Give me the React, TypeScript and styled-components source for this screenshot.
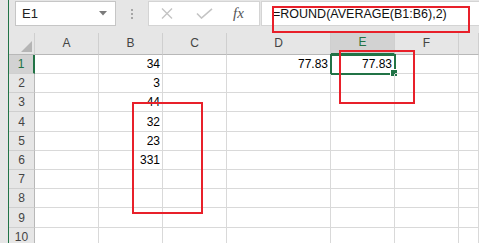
import styled, { createGlobalStyle, css } from "styled-components";

const GlobalStyle = createGlobalStyle`
  html, body {
    margin: 0;
    padding: 0;
    background: #e6e6e6;
  }
  * { box-sizing: border-box; }
`;

const GREEN = "#217346";
const RED = "#e8202a";
const GRID = "#d9d9d9";

const Window = styled.div`
  position: relative;
  width: 479px;
  height: 243px;
  overflow: hidden;
  display: flex;
  background: #e6e6e6;
  font-family: "Liberation Sans", Arial, sans-serif;
`;

const Gutter = styled.div`
  width: 9px;
  flex: none;
  background: #e6e6e6;
  border-right: 1px solid ${GREEN};
`;

const Main = styled.div`
  flex: 1;
  min-width: 0;
  display: flex;
  flex-direction: column;
`;

const FormulaBar = styled.div`
  height: 33px;
  flex: none;
  display: flex;
  align-items: flex-start;
  padding: 1px 0 0 6px;
`;

const NameBox = styled.div`
  width: 101px;
  height: 25px;
  background: #fff;
  border: 1px solid #c6c6c6;
  display: flex;
  align-items: center;
  justify-content: space-between;
  padding: 0 8px 0 6px;
  font-size: 13px;
  color: #222;
`;

const Dots = styled.div`
  width: 32px;
  height: 25px;
  display: flex;
  flex-direction: column;
  align-items: center;
  justify-content: center;
  gap: 2px;
  span {
    width: 2px;
    height: 2px;
    background: #a6a6a6;
  }
`;

const IconBox = styled.div`
  width: 112px;
  height: 25px;
  background: #fff;
  border: 1px solid #d4d4d4;
  display: flex;
  align-items: center;
  padding-left: 12px;
`;

const Fx = styled.span`
  font-family: "Liberation Serif", "Times New Roman", serif;
  font-style: italic;
  font-size: 15px;
  color: #555;
  margin-left: 20px;
`;

const FormulaInput = styled.div`
  flex: 1;
  height: 25px;
  margin-left: 1px;
  background: #fff;
  border: 1px solid #d4d4d4;
  border-right: none;
  display: flex;
  align-items: center;
  padding-left: 11px;
  font-size: 12.5px;
  color: #111;
  white-space: nowrap;
`;

const Sheet = styled.div`
  display: grid;
  grid-template-columns: 26px 64px 64px 64px 104px 64px 64px 1fr;
  background: #fff;
  flex: 1;
  align-content: start;
`;

const HeaderCell = styled.div<{ $active?: boolean }>`
  height: 22px;
  background: #e6e6e6;
  border-right: 1px solid #cfcfcf;
  border-bottom: 1px solid #b8b8b8;
  display: flex;
  align-items: flex-end;
  justify-content: center;
  padding-bottom: 4px;
  font-size: 12px;
  color: #444;
  ${({ $active }) =>
    $active &&
    css`
      background: #d2d2d2;
      color: ${GREEN};
      border-bottom: 2px solid ${GREEN};
    `}
`;

const Corner = styled(HeaderCell)`
  position: relative;
  svg {
    position: absolute;
    right: 2px;
    bottom: 2px;
  }
`;

const RowHead = styled.div<{ $h: number; $active?: boolean }>`
  height: ${({ $h }) => $h}px;
  background: #e6e6e6;
  border-right: 1px solid #b8b8b8;
  border-bottom: 1px solid #cfcfcf;
  display: flex;
  align-items: flex-end;
  justify-content: center;
  padding-bottom: 2px;
  font-size: 12px;
  color: #444;
  ${({ $active }) =>
    $active &&
    css`
      background: #d2d2d2;
      color: ${GREEN};
      border-right: 2px solid ${GREEN};
    `}
`;

const Cell = styled.div<{ $h: number }>`
  position: relative;
  height: ${({ $h }) => $h}px;
  border-right: 1px solid ${GRID};
  border-bottom: 1px solid ${GRID};
  display: flex;
  align-items: flex-end;
  justify-content: flex-end;
  padding: 0 2px 2px 0;
  font-size: 12px;
  color: #000;
`;

const Selection = styled.div`
  position: absolute;
  left: -1px;
  right: -2px;
  top: -1px;
  bottom: -2px;
  border: 2px solid ${GREEN};
  pointer-events: none;
  &::after {
    content: "";
    position: absolute;
    right: -4px;
    bottom: -4px;
    width: 6px;
    height: 6px;
    background: ${GREEN};
    border: 1px solid #fff;
  }
`;

const Annotation = styled.div<{ $x: number; $y: number; $w: number; $h: number }>`
  position: absolute;
  left: ${({ $x }) => $x}px;
  top: ${({ $y }) => $y}px;
  width: ${({ $w }) => $w}px;
  height: ${({ $h }) => $h}px;
  border: 2px solid ${RED};
  pointer-events: none;
`;

const columns = ["A", "B", "C", "D", "E", "F", ""];
const rowHeights = [19, 19, 19, 20, 19, 19, 19, 19, 20, 19];
const data: Record<string, string> = {
  B1: "34",
  B2: "3",
  B3: "44",
  B4: "32",
  B5: "23",
  B6: "331",
  D1: "77.83",
  E1: "77.83",
};

export default function App() {
  return (
    <>
      <GlobalStyle />
      <Window>
        <Gutter />
        <Main>
          <FormulaBar>
            <NameBox>
              E1
              <svg width="8" height="5" viewBox="0 0 8 5">
                <path d="M0 0 L8 0 L4 4.5 Z" fill="#7a7a7a" />
              </svg>
            </NameBox>
            <Dots>
              <span />
              <span />
              <span />
            </Dots>
            <IconBox>
              <svg width="12" height="11" viewBox="0 0 12 11">
                <path d="M1 0.5 L11 10.5 M11 0.5 L1 10.5" stroke="#c4c4c4" strokeWidth="1.4" />
              </svg>
              <svg width="17" height="11" viewBox="0 0 17 11" style={{ marginLeft: 23 }}>
                <path d="M1 5.5 L5.5 10 L16 0.8" stroke="#c4c4c4" strokeWidth="1.6" fill="none" />
              </svg>
              <Fx>fx</Fx>
            </IconBox>
            <FormulaInput>=ROUND(AVERAGE(B1:B6),2)</FormulaInput>
          </FormulaBar>
          <Sheet>
            <Corner>
              <svg width="11" height="11" viewBox="0 0 11 11">
                <path d="M11 0 L11 11 L0 11 Z" fill="#b5b5b5" />
              </svg>
            </Corner>
            {columns.map((c, i) => (
              <HeaderCell key={i} $active={c === "E"}>
                {c}
              </HeaderCell>
            ))}
            {rowHeights.map((h, r) => (
              <Row key={r} row={r + 1} h={h} />
            ))}
          </Sheet>
        </Main>
        <Annotation $x={272} $y={6} $w={198} $h={27} />
        <Annotation $x={339} $y={50} $w={76} $h={54} />
        <Annotation $x={132} $y={102} $w={71} $h={112} />
      </Window>
    </>
  );
}

function Row({ row, h }: { row: number; h: number }) {
  return (
    <>
      <RowHead $h={h} $active={row === 1}>
        {row}
      </RowHead>
      {columns.map((c, i) => {
        const key = `${c}${row}`;
        return (
          <Cell key={i} $h={h}>
            {data[key]}
            {key === "E1" && <Selection />}
          </Cell>
        );
      })}
    </>
  );
}
